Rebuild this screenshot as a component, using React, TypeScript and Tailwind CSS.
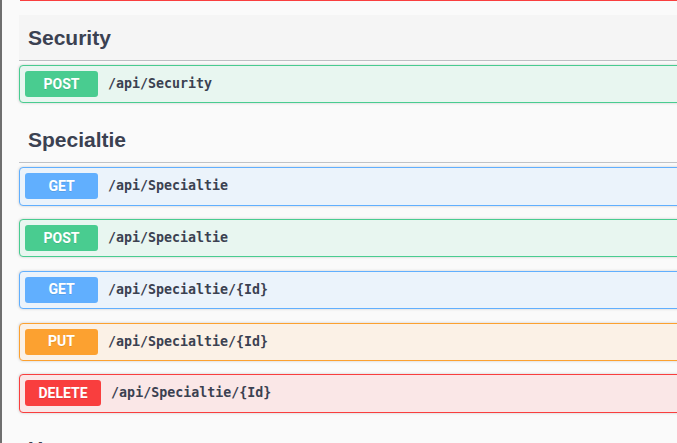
type Method = "GET" | "POST" | "PUT" | "DELETE";

interface Operation {
  method: Method;
  path: string;
}

interface Section {
  name: string;
  hovered?: boolean;
  ops: Operation[];
}

const styles: Record<Method, { card: string; badge: string }> = {
  GET: {
    card: "border-[#61affe] bg-[#ebf3fb]",
    badge: "bg-[#61affe]",
  },
  POST: {
    card: "border-[#49cc90] bg-[#e8f6f0]",
    badge: "bg-[#49cc90]",
  },
  PUT: {
    card: "border-[#fca130] bg-[#fbf1e6]",
    badge: "bg-[#fca130]",
  },
  DELETE: {
    card: "border-[#f93e3e] bg-[#fae7e7]",
    badge: "bg-[#f93e3e]",
  },
};

const sections: Section[] = [
  {
    name: "Security",
    hovered: true,
    ops: [{ method: "POST", path: "/api/Security" }],
  },
  {
    name: "Specialtie",
    ops: [
      { method: "GET", path: "/api/Specialtie" },
      { method: "POST", path: "/api/Specialtie" },
      { method: "GET", path: "/api/Specialtie/{Id}" },
      { method: "PUT", path: "/api/Specialtie/{Id}" },
      { method: "DELETE", path: "/api/Specialtie/{Id}" },
    ],
  },
  { name: "Users", ops: [] },
];

function OpBlock({ op }: { op: Operation }) {
  const s = styles[op.method];
  return (
    <div
      className={`h-[38.25px] mb-[13.5px] border rounded-[4px] shadow-[0_0_3px_rgba(0,0,0,0.19)] flex items-center pl-[5px] ${s.card}`}
    >
      <span
        className={`h-[26px] min-w-[73px] px-[13.5px] rounded-[3px] flex items-center justify-center text-white font-bold text-[14px] [text-shadow:0_1px_0_rgba(0,0,0,0.1)] ${s.badge}`}
        style={{ fontFamily: 'Roboto, "Liberation Sans", sans-serif' }}
      >
        {op.method}
      </span>
      <span
        className="ml-[10px] text-[#3b4151] font-bold text-[13.3px]"
        style={{ fontFamily: '"DejaVu Sans Mono", "Liberation Mono", monospace' }}
      >
        {op.path}
      </span>
    </div>
  );
}

export default function App() {
  return (
    <div className="w-[677px] h-[443px] overflow-hidden bg-[#fafafa] flex">
      <div className="w-[2px] shrink-0 bg-[#6f6f6f]" />
      <div className="flex-1 min-w-0 overflow-hidden pl-[17px]">
        <div className="w-[720px]">
          {/* tail of the previous operation */}
          <div className="h-px ml-px bg-[#f93e3e] mb-[13.5px]" />

          {sections.map((sec) => (
            <div key={sec.name}>
              <div
                className={`h-[46px] border-b border-[#3b4151]/30 mb-[4.5px] flex items-center pl-[9px] ${
                  sec.hovered ? "bg-[#f5f5f5]" : ""
                }`}
              >
                <h4
                  className="text-[21px] font-bold leading-none text-[#3b4151]"
                  style={{ fontFamily: '"Liberation Sans", Arial, sans-serif' }}
                >
                  {sec.name}
                </h4>
              </div>
              {sec.ops.map((op, i) => (
                <OpBlock key={i} op={op} />
              ))}
            </div>
          ))}
        </div>
      </div>
    </div>
  );
}
